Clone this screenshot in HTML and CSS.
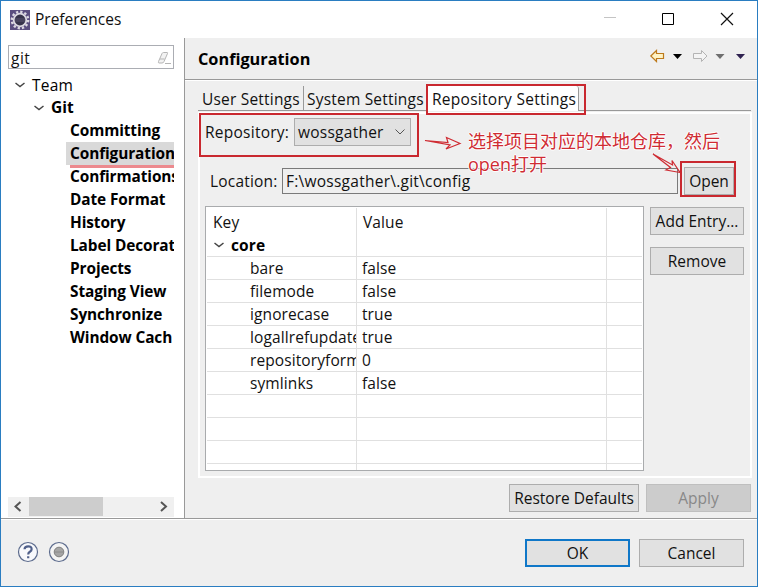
FILE: index.html
```
<!DOCTYPE html>
<html lang="en">
<head>
<meta charset="utf-8">
<title>Preferences</title>
<link rel="stylesheet" href="styles.css">
</head>
<body>
<div class="window">
  <header class="titlebar">
    <svg class="app-icon" width="20" height="20" viewBox="0 0 20 20"><rect width="20" height="20" fill="#5b4e80"/><circle cx="10" cy="10" r="8.200" fill="none" stroke="#dcd8e2" stroke-width="2.400" stroke-dasharray="2.300 1.990"/><circle cx="10" cy="10" r="6.300" fill="#37334b" stroke="#dcd8e2" stroke-width="1.800"/><path d="M5 9h10M5 11h10" stroke="#5a5570" stroke-width="1"/></svg>
    <span class="title">Preferences</span>
    <svg class="controls" width="134" height="14" viewBox="0 0 134 14"><path d="M0 5.500h12" stroke="#c4c4c4"/><path d="M58.500 1.500h11v11h-11z" fill="none" stroke="#000"/><path d="M117 1l12 12M129 1l-12 12" stroke="#111" stroke-width="1.200"/></svg>
  </header>
  <div class="body">
    <aside class="sidebar">
      <div class="search"><span>git</span><svg width="14" height="14" viewBox="0 0 14 14"><path d="M1.500 10.500L5 2.500Q5.500 1.500 6.500 1.500h3.500Q11 1.500 10.500 2.500L7 10.500Q6.500 12 5 12H2Q1 12 1.500 10.500zM3 8h4.500" fill="#f2f2f2" stroke="#b5b5b5"/><path d="M8 12.500h6" stroke="#b5b5b5"/></svg></div>
      <ul class="tree">
        <li class="team"><svg class="chev" width="10" height="6" viewBox="0 0 10 6"><path d="M.5 1L5 4.500 9.500 1" fill="none" stroke="#444" stroke-width="1.500"/></svg>Team</li>
        <li class="git"><svg class="chev" width="10" height="6" viewBox="0 0 10 6"><path d="M.5 1L5 4.500 9.500 1" fill="none" stroke="#444" stroke-width="1.500"/></svg>Git</li>
        <li class="leaf">Committing</li>
        <li class="leaf selected">Configuration</li>
        <li class="leaf">Confirmations</li>
        <li class="leaf">Date Format</li>
        <li class="leaf">History</li>
        <li class="leaf">Label Decorat</li>
        <li class="leaf">Projects</li>
        <li class="leaf">Staging View</li>
        <li class="leaf">Synchronize</li>
        <li class="leaf">Window Cach</li>
      </ul>
      <div class="scrollbar">
        <svg width="21" height="19" viewBox="0 0 21 19"><path d="M12.500 5L7.500 9.500l5 4.500" fill="none" stroke="#555" stroke-width="2"/></svg>
        <div class="thumb"></div>
        <svg class="right" width="21" height="19" viewBox="0 0 21 19"><path d="M8 5l5 4.500L8 14" fill="none" stroke="#555" stroke-width="2"/></svg>
      </div>
    </aside>
    <main class="page">
      <div class="page-head">
        <h1>Configuration</h1>
        <svg width="98" height="14" viewBox="0 0 98 14"><path d="M.8 7L6.500 1.500v3h7v5h-7v3z" fill="#fff3c4" stroke="#bd7a1c" stroke-width="1.200"/><path d="M23 5h9l-4.500 5z" fill="#000"/><path d="M57 7l-5.500-5.500v3h-8v5h8v3z" fill="#f4f4f4" stroke="#b4b4b4"/><path d="M65.500 5h9l-4.500 5z" fill="#6f6f6f"/><path d="M86 5h9l-4.500 5z" fill="#2f2250"/></svg>
      </div>
      <nav class="tabs">
        <div class="tab user">User Settings</div>
        <div class="tab system">System Settings</div>
        <div class="tab active">Repository Settings</div>
      </nav>
      <section class="panel">
        <div class="repo-row"><label>Repository:</label><div class="combo"><span>wossgather</span><svg width="12" height="8" viewBox="0 0 12 8"><path d="M1.500 1.500L6 6l4.500-4.500" fill="none" stroke="#555"/></svg></div></div>
        <div class="loc-row"><label>Location:</label><div class="field">F:\wossgather\.git\config</div><div class="btn open">Open</div></div>
        <div class="content">
          <div class="table">
            <div class="row head"><span>Key</span><span>Value</span><span></span></div>
            <div class="row core"><span><svg class="chev" width="10" height="6" viewBox="0 0 10 6"><path d="M.5 1L5 4.500 9.500 1" fill="none" stroke="#444" stroke-width="1.500"/></svg>core</span><span></span><span></span></div>
            <div class="row"><span>bare</span><span>false</span><span></span></div>
            <div class="row"><span>filemode</span><span>false</span><span></span></div>
            <div class="row"><span>ignorecase</span><span>true</span><span></span></div>
            <div class="row"><span>logallrefupdate</span><span>true</span><span></span></div>
            <div class="row"><span>repositoryform</span><span>0</span><span></span></div>
            <div class="row"><span>symlinks</span><span>false</span><span></span></div>
            <div class="row"><span></span><span></span><span></span></div>
            <div class="row"><span></span><span></span><span></span></div>
            <div class="row"><span></span><span></span><span></span></div>
            <div class="row last"><span></span><span></span><span></span></div>
          </div>
          <div class="side-buttons"><div class="btn add">Add Entry...</div><div class="btn remove">Remove</div></div>
        </div>
      </section>
      <div class="page-actions"><div class="btn restore">Restore Defaults</div><div class="btn apply">Apply</div></div>
    </main>
  </div>
  <footer class="footer">
    <svg width="54" height="22" viewBox="0 0 54 22"><circle cx="11" cy="11" r="9.500" fill="#f8f9fc" stroke="#5c6b8d" stroke-width="1.200"/><path d="M7.500 8.300Q7.700 5.300 11.200 5.300T14.600 8.300Q14.600 9.800 12.900 10.800T11.200 13.500M11.200 15.200v2" fill="none" stroke="#50608a" stroke-width="2.200"/><circle cx="42" cy="11" r="9.500" fill="#f4f4f4" stroke="#5c6b8d" stroke-width="1.200"/><circle cx="42" cy="11" r="4.800" fill="#a5a5a5" stroke="#808080"/><path d="M38 11h8" stroke="#8a8a8a"/></svg>
    <div class="btn ok">OK</div><div class="btn cancel">Cancel</div>
  </footer>
  <div class="mark mark-repo"></div>
  <div class="mark mark-tab"></div>
  <div class="mark mark-open"></div>
  <div class="note" lang="zh-CN">选择项目对应的本地仓库，然后<br>open打开</div>
  <svg class="arrows" width="270" height="50" viewBox="420 130 270 50"><path d="M425 140.500L448 142.500 446.500 137.500 460 143.500 446 149 450 145z" fill="none" stroke="#cf2c33" stroke-width="1.200"/><path d="M653 154L672.500 165 672 160.500 680 172.500 666 170 670.500 167.500z" fill="none" stroke="#cf2c33" stroke-width="1.200"/></svg>
</div>
</body>
</html>
```
FILE: styles.css
```
* { box-sizing: border-box; }
body { margin: 0; font: 15.5px/23px "Open Sans", "Noto Sans", "Noto Sans CJK SC", sans-serif; color: #111; }
.window { position: relative; width: 758px; height: 587px; border: 1px solid #2a7dc1; background: #fff; display: flex; flex-direction: column; overflow: hidden; white-space: nowrap; }
.titlebar { height: 37px; display: flex; align-items: center; padding: 0 19px 0 9px; flex: none; }
.title { margin-left: 5px; }
.controls { margin-left: auto; position: relative; top: -1px; }
.app-icon { display: block; }
.body { height: 480px; display: flex; flex: none; }
.sidebar { width: 184px; border-right: 1px solid #999; padding: 7px 10px 1px 7px; display: flex; flex-direction: column; }
.search { height: 24px; width: 166px; border: 1px solid #abadb3; padding: 2px 2px 0; display: flex; align-items: center; justify-content: space-between; letter-spacing: .5px; }
.tree { list-style: none; margin: 5px 0 0; padding: 0; width: 166px; overflow: hidden; color: #000; }
.tree li { height: 23px; display: flex; align-items: center; }
.chev { flex: none; }
.tree .team { padding-left: 7px; height: 22px; letter-spacing: .2px; }
.team .chev { margin-right: 7px; }
.git { padding-left: 26px; font-weight: 700; }
.git .chev { margin-right: 7px; }
.leaf { margin-left: 58px; padding-left: 4px; font-weight: 700; font-size: 15.4px; letter-spacing: -.1px; }
.selected { background: #d9d9d9; }
.selected + .leaf { background: linear-gradient(#ec8a8e, #ec8a8e) 4px 0 / 104px 3px no-repeat; }
.scrollbar { margin-top: auto; height: 20px; width: 166px; background: #f0f0f0; display: flex; }
.thumb { width: 74px; height: 19px; background: #cdcdcd; }
.right { margin-left: auto; }
.page { flex: 1; background: #efefef; display: flex; flex-direction: column; }
.page-head { height: 42px; border-bottom: 1px solid #999; box-shadow: 0 1px #fff; display: flex; align-items: center; justify-content: space-between; padding: 0 9px 3px 13px; flex: none; }
.page-head svg { position: relative; top: -1px; }
h1 { margin: 0; font-size: 16.3px; line-height: 23px; color: #000; padding-top: 5px; }
.tabs { height: 31px; margin: 0 6px 0 13px; border-bottom: 1px solid #999; display: flex; align-items: flex-end; flex: none; letter-spacing: .2px; }
.tab { height: 24px; padding-top: 2px; }
.user { width: 106px; padding-left: 4px; border-right: 1px solid #999; }
.system { width: 124px; padding-left: 3px; }
.active { width: 151px; height: 25px; padding: 2px 0 0 4px; background: #fff; border-right: 1px solid #999; margin-bottom: -1px; border-radius: 0 3px 0 0; letter-spacing: .28px; }
.panel { margin: 1px 5px 0 13px; height: 366px; border: 2px solid #fff; padding: 2px 6px 5px 5px; flex: none; display: flex; flex-direction: column; }
.repo-row { height: 32px; display: flex; align-items: center; letter-spacing: .25px; }
.repo-row label { width: 89px; }
.combo { width: 117px; height: 28px; border: 1px solid #adadad; background: #e1e1e1; display: flex; align-items: center; justify-content: space-between; padding: 0 4px 0 3px; }
.loc-row { height: 26px; margin: 20px 0 12px 5px; display: flex; align-items: center; flex: none; }
.loc-row label { width: 72px; letter-spacing: .2px; }
.field { width: 396px; height: 26px; border: 1px solid #7a7a7a; padding: 1px 0 0 3px; letter-spacing: .25px; }
.btn { height: 28px; border: 1px solid #adadad; background: #e1e1e1; display: flex; align-items: center; justify-content: center; flex: none; }
.open { width: 50px; margin-left: 6px; }
.content { display: flex; justify-content: space-between; }
.table { width: 439px; height: 265px; border: 1px solid #a9abad; padding: 1px; background: #fff; overflow: hidden; letter-spacing: .1px; }
.row { height: 23px; display: grid; grid-template-columns: 150px 250px 1fr; border-bottom: 1px solid #e0e0e0; }
.row span { border-right: 1px solid #e0e0e0; overflow: hidden; height: 23px; line-height: 23px; padding-left: 5px; }
.row span:first-child { padding-left: 43px; }
.row span:last-child { border-right: 0; }
.head { height: 25px; border: 0; }
.head span { height: 25px; line-height: 28px; padding-left: 6px; }
.row.head span:first-child { padding-left: 6px; }
.row.core span:first-child { padding-left: 7px; font-weight: 700; color: #000; display: flex; align-items: center; height: 24px; }
.row.core { height: 24px; }
.row.core span:nth-child(2) { height: 24px; }
.core .chev { margin-right: 7px; }
.side-buttons { width: 94px; padding-top: 1px; display: flex; flex-direction: column; gap: 12px; }
.page-actions { display: flex; justify-content: flex-end; gap: 7px; padding: 6px 6px 0 0; }
.restore { width: 130px; }
.apply { width: 105px; background: #ccc; border-color: #bfbfbf; color: #888; }
.footer { flex: 1; border-top: 1px solid #999; box-shadow: inset 0 1px #fff; background: #efefef; display: flex; padding: 20px 13px 0 16px; }
.footer svg { margin-top: 2px; }
.ok { width: 105px; border: 2px solid #0f77c8; margin-left: auto; margin-right: 9px; }
.cancel { width: 105px; }
.mark { position: absolute; border: 2px solid #c9282f; }
.mark-repo { left: 198px; top: 112px; width: 220px; height: 44px; }
.mark-tab { left: 425px; top: 83px; width: 160px; height: 31px; }
.mark-open { left: 679px; top: 160px; width: 56px; height: 36px; }
.note { position: absolute; left: 467px; top: 129px; font: 18px/23px "Open Sans", "Noto Sans CJK SC", sans-serif; color: #cf2c33; text-shadow: 1px 0 #fff, -1px 0 #fff, 0 1px #fff, 0 -1px #fff; }
.arrows { position: absolute; left: 419px; top: 129px; }
```
